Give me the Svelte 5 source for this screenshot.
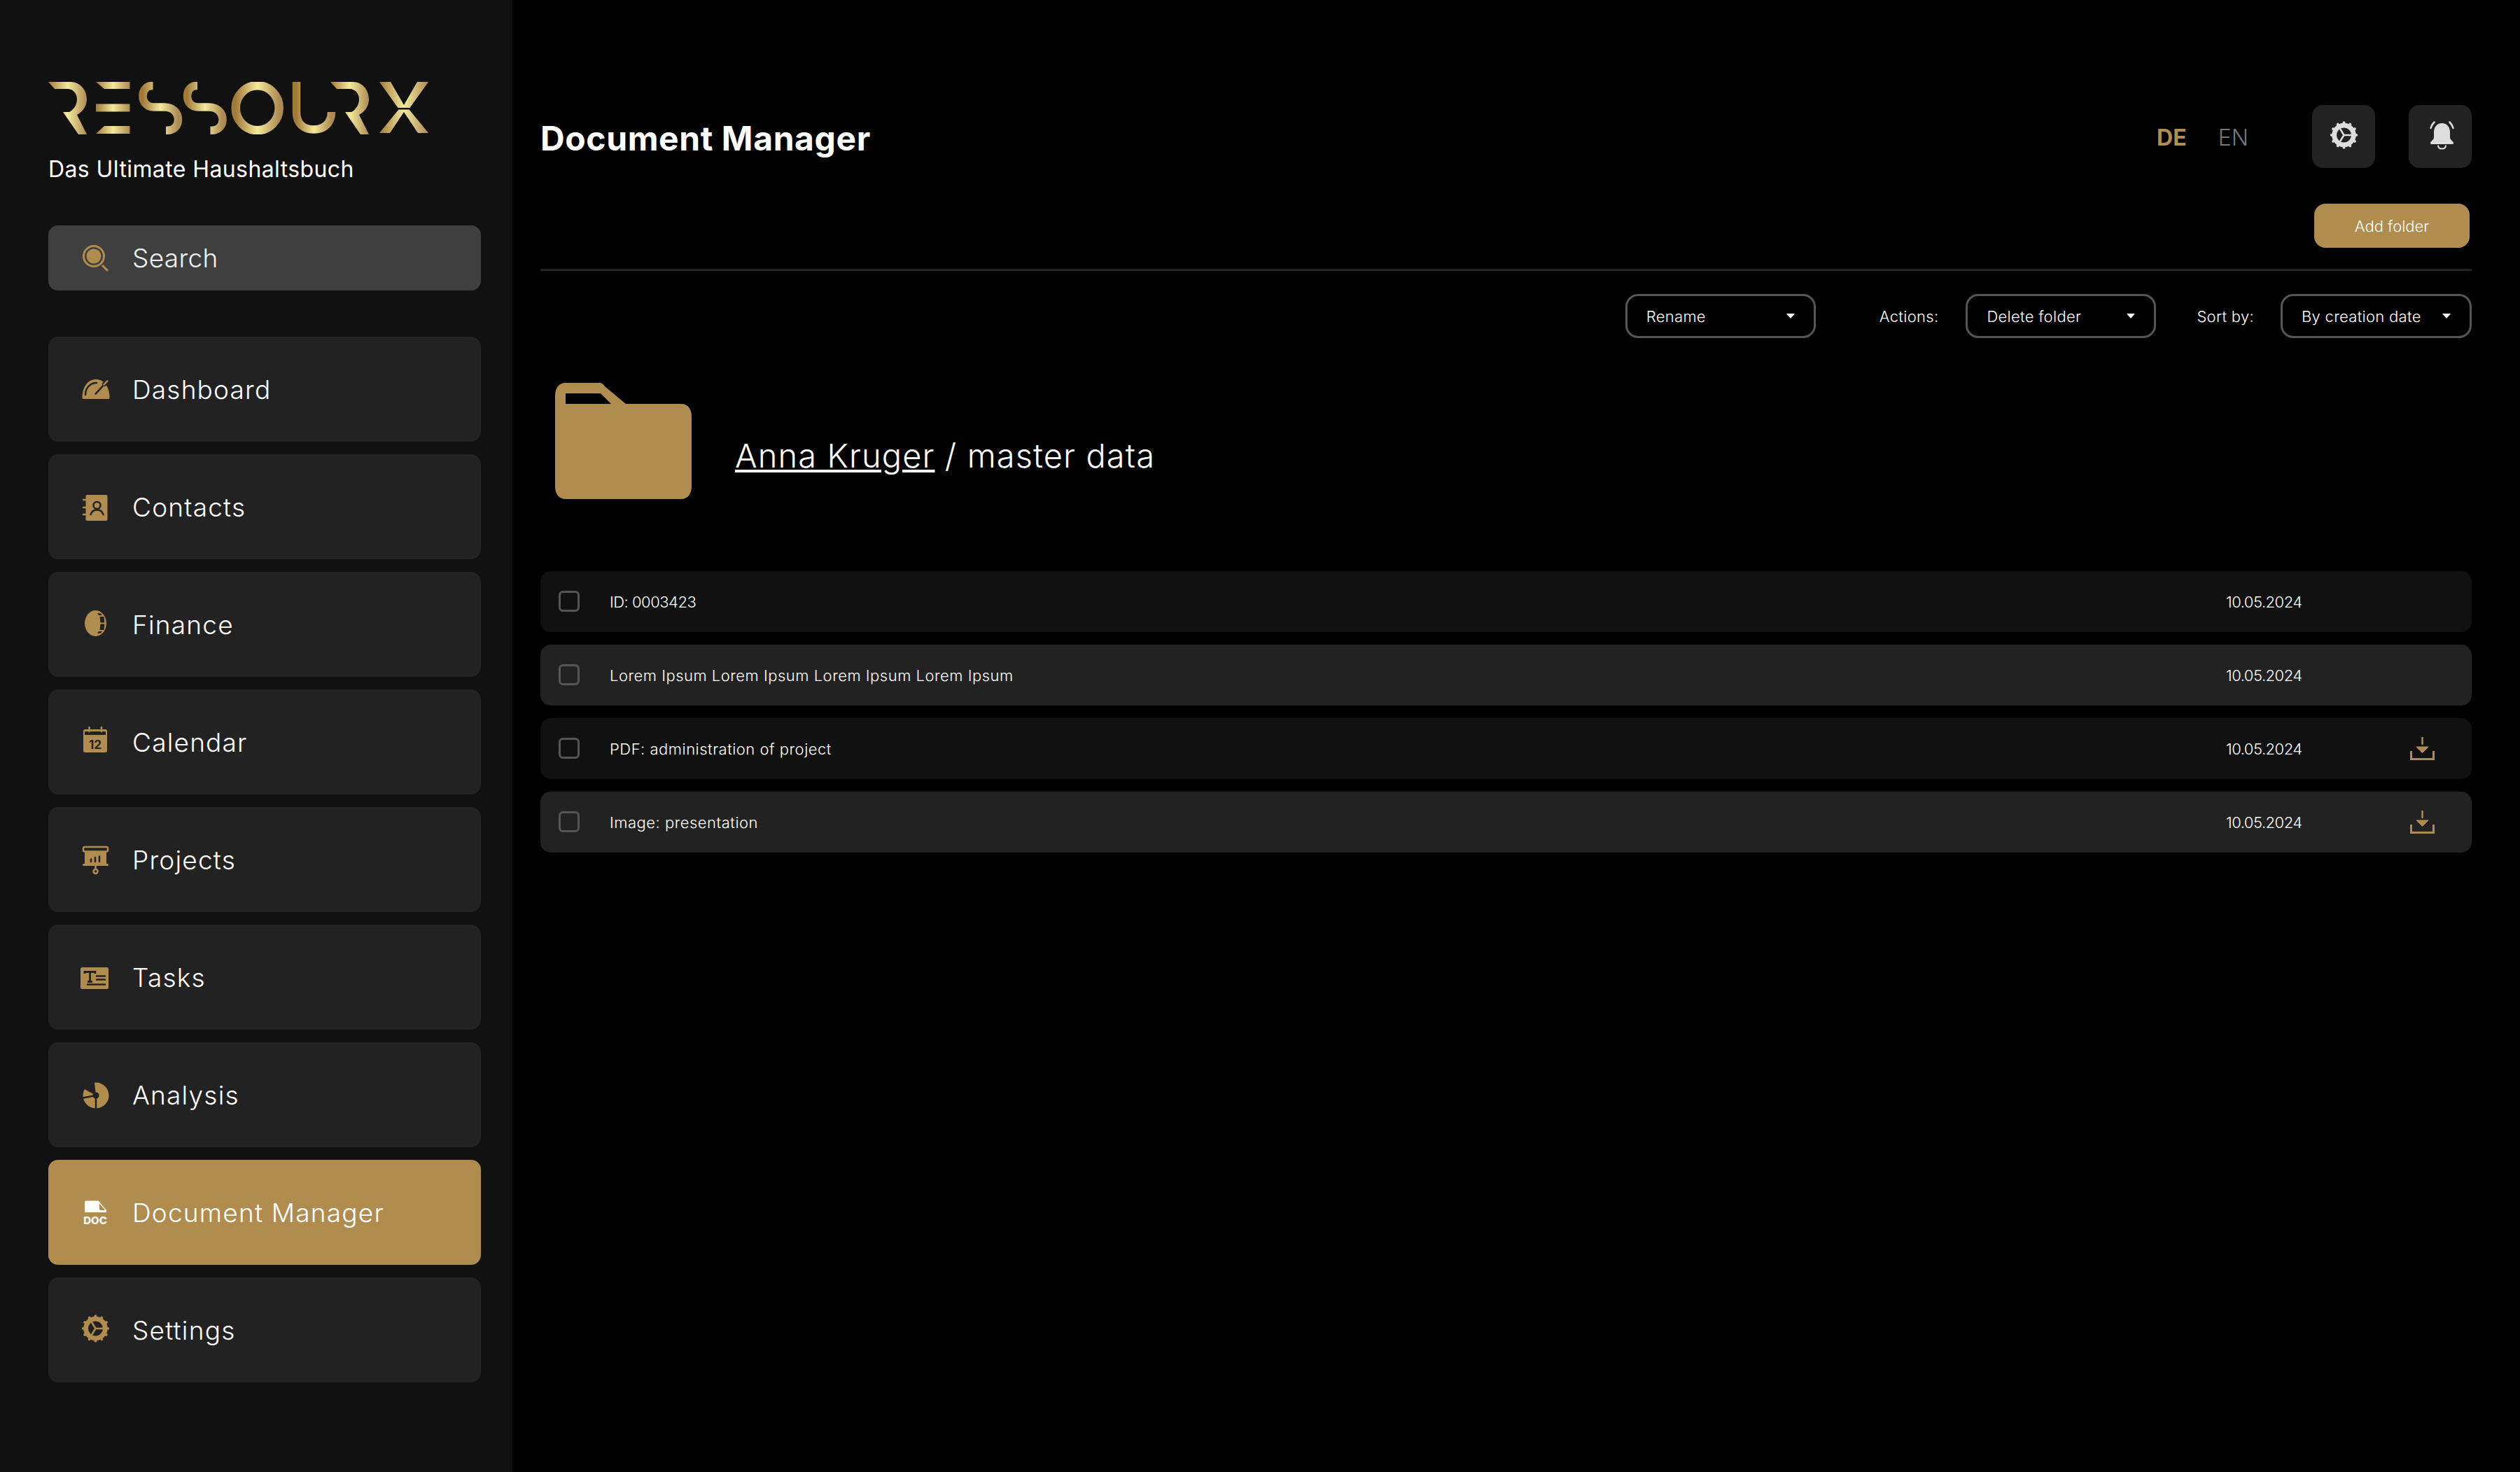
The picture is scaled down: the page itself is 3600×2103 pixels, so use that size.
<script>
  const nav = [
    { id: 'dashboard', label: 'Dashboard' },
    { id: 'contacts', label: 'Contacts' },
    { id: 'finance', label: 'Finance' },
    { id: 'calendar', label: 'Calendar' },
    { id: 'projects', label: 'Projects' },
    { id: 'tasks', label: 'Tasks' },
    { id: 'analysis', label: 'Analysis' },
    { id: 'docs', label: 'Document Manager', active: true },
    { id: 'settings', label: 'Settings' }
  ]

  const rows = [
    { name: 'ID: 0003423', date: '10.05.2024' },
    { name: 'Lorem Ipsum Lorem Ipsum Lorem Ipsum Lorem Ipsum', date: '10.05.2024' },
    { name: 'PDF: administration of project', date: '10.05.2024', download: true },
    { name: 'Image: presentation', date: '10.05.2024', download: true }
  ]

  const teeth = [0, 30, 60, 90, 120, 150, 180, 210, 240, 270, 300, 330]

  // R of the logo, used twice
  const logoR = 'M0 0H32C45 0 55 11 55 25C55 34 50 42 41 47L55 75H43L21 43H30C36 40 41 33 41 25C41 16 35 10 27 10H9Z'
</script>

{#snippet gear()}
  <g fill="currentColor">
    {#each teeth as a}
      <rect x="21.7" y="2.5" width="3.6" height="5" rx="1.2" transform="rotate({a} 23.5 22)" />
    {/each}
    <path fill-rule="evenodd" d="M23.5 4.7a17.3 17.3 0 1 0 0 34.600a17.3 17.3 0 1 0 0-34.600ZM23.5 11.500a10.500 10.500 0 1 1 0 21a10.500 10.500 0 1 1 0-21Z" />
  </g>
  <path d="M23.5 22H34M23.5 22L18 13M23.5 22L18 31" fill="none" stroke="currentColor" stroke-width="2.5" />
{/snippet}

<div class="app">
  <aside class="sidebar">
    <svg class="logo" viewBox="0 0 543 75" width="543" height="75" aria-label="RESSOURX">
      <defs>
        <linearGradient id="gold">
          <stop offset="0" stop-color="#a27a38" />
          <stop offset="0.5" stop-color="#f4e99c" />
          <stop offset="1" stop-color="#ad8b52" />
        </linearGradient>
      </defs>
      <path fill="url(#gold)" d={logoR} />
      <path fill="url(#gold)" d="M68 0H116.5V10H80Z" />
      <rect fill="url(#gold)" x="68" y="31.5" width="48.5" height="11" />
      <path fill="url(#gold)" d="M80 63H116.5V74H68Z" />
      <g fill="none" stroke="url(#gold)" stroke-width="11.5">
        <path d="M149.5 5.5H148C140 5.5 135 12 135 20C135 30 142 36 150 36H166C178 36 185.5 44 185.5 54C185.5 64 178 69.5 168 69.5" />
        <path d="M213 5.5H211.5C203.5 5.5 198.5 12 198.5 20C198.5 30 205.5 36 213.5 36H229.5C241.5 36 249 44 249 54C249 64 241.5 69.5 231.5 69.5" />
        <ellipse cx="298.7" cy="37.2" rx="31" ry="32" stroke-width="12.5" />
        <path d="M354.5 0V43C354.5 60 365 68 379 68C393 68 404.5 60 404.5 43" />
      </g>
      <path fill="url(#gold)" transform="translate(403 0)" d={logoR} />
      <path fill="url(#gold)" d="M473 0H489L508 33L527 0H543L516.5 37H499.5Z" />
      <path fill="url(#gold)" d="M500.5 39.5H515.5L543 73H528L508 43L488 73H473Z" />
    </svg>
    <div class="tagline">Das Ultimate Haushaltsbuch</div>

    <div class="search">
      <svg class="nav-icon" viewBox="0 0 48 48" width="48" height="48">
        <circle cx="21" cy="21" r="14.5" fill="none" stroke="currentColor" stroke-width="3" />
        <circle cx="21" cy="21" r="10.5" fill="currentColor" />
        <path d="M33 34L41 42" stroke="currentColor" stroke-width="3" />
      </svg>
      <span>Search</span>
    </div>

    <nav class="nav">
      {#each nav as item}
        <div class="nav-item" class:active={item.active}>
          <svg class="nav-icon" viewBox="0 0 48 48" width="48" height="48">
            {#if item.id === 'dashboard'}
              <path fill="currentColor" d="M4.5 36C4.5 20 13 10 24 10C35 10 43.5 20 43.5 36Q43.5 38 42 38H6Q4.5 38 4.5 36Z" />
              <path fill="none" stroke="#222" stroke-width="2.5" stroke-linecap="round" d="M9 32C9 22 16 15 25 15" />
              <path fill="none" stroke="#222" stroke-width="2.5" stroke-linecap="round" d="M23.7 30.7L36 17" />
              <path fill="none" stroke="#222" stroke-width="6" d="M34.5 18.500L42 10.500" />
              <path fill="none" stroke="currentColor" stroke-width="2.5" stroke-linecap="round" d="M35.5 17.500L40.3 12.300" />
            {:else if item.id === 'contacts'}
              <rect x="9.5" y="7" width="31" height="37" rx="2" fill="currentColor" />
              <path d="M6 14H11M6 25H11M6 35H11" stroke="currentColor" stroke-width="2.5" stroke-linecap="round" />
              <circle cx="25.5" cy="22" r="5" fill="none" stroke="#222" stroke-width="2.5" />
              <path d="M16.5 35C18 30 21 28.5 25.5 28.5C30 28.5 33 30 34.5 35" fill="none" stroke="#222" stroke-width="2.5" stroke-linecap="round" />
            {:else if item.id === 'finance'}
              <ellipse cx="23.5" cy="22.5" rx="15.5" ry="18.5" fill="currentColor" />
              <path fill="#222" d="M29.5 13H35.500L36.300 21.500H30.500ZM30.500 23.500H36.300L35.500 32H29.500ZM26 8L31 8.500L33 11H28ZM26 37L31 36.500L33 34H28Z" />
            {:else if item.id === 'calendar'}
              <rect x="6" y="6" width="34" height="33" rx="2.5" fill="currentColor" />
              <rect x="8" y="9" width="30" height="5" fill="#222" />
              <path d="M14.5 3V9M32 3V9" stroke="currentColor" stroke-width="2.5" stroke-linecap="round" />
              <text class="icon-num" x="23" y="34" text-anchor="middle">12</text>
            {:else if item.id === 'projects'}
              <rect x="6" y="6" width="35" height="6.500" rx="2" fill="none" stroke="currentColor" stroke-width="2.5" />
              <rect x="8" y="12.500" width="31" height="18" fill="currentColor" />
              <rect x="5" y="30" width="37" height="3" rx="1.5" fill="currentColor" />
              <path d="M23.5 33V38" stroke="currentColor" stroke-width="2.5" />
              <circle cx="23.5" cy="41" r="3" fill="none" stroke="currentColor" stroke-width="2.5" />
              <path d="M17 27V23.500M23 27V21M29 27V19.500" stroke="#222" stroke-width="2.500" stroke-linecap="round" />
            {:else if item.id === 'tasks'}
              <rect x="2" y="10" width="40" height="31" rx="2.5" fill="currentColor" />
              <path d="M8 19V16.5H23V19M15.5 16.5V30M12 30.5H19" fill="none" stroke="#222" stroke-width="2.8" />
              <path d="M25 22.5H37M25 27.5H37M12 34.5H37" stroke="#222" stroke-width="2.5" stroke-linecap="round" />
            {:else if item.id === 'analysis'}
              <circle cx="24" cy="25" r="18.5" fill="currentColor" />
              <path d="M24 25L21.500 2L2 4L4 14Z" fill="#222" />
              <path d="M24 25V45M24 25L3 29" stroke="#222" stroke-width="2.500" />
              <circle cx="24" cy="25" r="4.500" fill="#222" />
            {:else if item.id === 'docs'}
              <path fill="currentColor" d="M10 7.5H27.700L39 21V24H8V9.5A2 2 0 0 1 10 7.5Z" />
              <path fill="#B08D4F" d="M29 11L37 21H31C29.500 21 29 20 29 19Z" />
              <text class="icon-doc" x="23" y="40.5" text-anchor="middle">DOC</text>
            {:else}
              {@render gear()}
            {/if}
          </svg>
          <span class="nav-label">{item.label}</span>
        </div>
      {/each}
    </nav>
  </aside>

  <main class="main">
    <header class="header">
      <h1>Document Manager</h1>
      <div class="lang">
        <span class="de">DE</span>
        <span class="en">EN</span>
      </div>
      <button class="square">
        <svg viewBox="0 0 48 48" width="48" height="48">{@render gear()}</svg>
      </button>
      <button class="square bell">
        <svg viewBox="0 0 48 48" width="48" height="48">
          <path fill="currentColor" d="M25.5 5C18 5 14 11 14 18V25C14 29 9 31 9 33C9 35 10 35 12 35H39C41 35 42 35 42 33C42 31 37 29 37 25V18C37 11 33 5 25.5 5Z" />
          <path fill="none" stroke="currentColor" stroke-width="2" d="M20 36.5C20 40 22.5 41.5 25.5 41.5C28.5 41.5 31 40 31 36.5" />
          <path fill="none" stroke="currentColor" stroke-width="2.5" stroke-linecap="round" d="M9.5 12C10.5 8.5 12 6 14.5 3.5M41.5 12C40.5 8.5 39 6 36.5 3.5" />
        </svg>
      </button>
    </header>

    <div class="add-row">
      <button class="add">Add folder</button>
    </div>
    <div class="divider"></div>

    <div class="filters">
      <div class="select"><span>Rename</span><i class="caret"></i></div>
      <span class="filter-label actions">Actions:</span>
      <div class="select"><span>Delete folder</span><i class="caret"></i></div>
      <span class="filter-label sort">Sort by:</span>
      <div class="select wide"><span>By creation date</span><i class="caret"></i></div>
    </div>

    <div class="folder-head">
      <svg class="folder" viewBox="0 0 195 166" width="195" height="166">
        <path fill="#B08D4F" fill-rule="evenodd" d="M15 0H62C67 0 69 2 71 5L101 30H180C190 30 195 38 195 48V148C195 158 190 166 180 166H15C5 166 0 158 0 148V18C0 8 5 0 15 0ZM15 15V30H80L65 15Z" />
      </svg>
      <div class="crumb"><u>Anna Kruger</u> / master data</div>
    </div>

    <div class="rows">
      {#each rows as row}
        <div class="row">
          <span class="check"></span>
          <span class="name">{row.name}</span>
          <span class="date">{row.date}</span>
          <span class="action">
            {#if row.download}
              <svg viewBox="0 0 35 33" width="35" height="33">
                <path d="M17.5 0V10" stroke="#B08D4F" stroke-width="2.5" stroke-linecap="round" />
                <path d="M9 14H26L17.5 22.5Z" fill="#B08D4F" stroke="#B08D4F" stroke-linejoin="round" />
                <path d="M1.5 20V31.5H33.5V20" fill="none" stroke="#B08D4F" stroke-width="3" />
              </svg>
            {/if}
          </span>
        </div>
      {/each}
    </div>
  </main>
</div>

<style>
  :global(body) {
    margin: 0;
    background: #000;
    color: #fff;
    font-family: Inter, "Open Sans", sans-serif;
  }
  .app {
    display: flex;
    height: 100vh;
    overflow: hidden;
  }

  .sidebar {
    width: 732px;
    flex-shrink: 0;
    box-sizing: border-box;
    background: #111;
    padding: 117px 45px 0 69px;
  }
  .logo { display: block; }
  .tagline {
    margin-top: 30px;
    font-size: 32px;
    line-height: 40px;
    font-weight: 400;
    letter-spacing: 0.4px;
  }
  .search {
    display: flex;
    align-items: center;
    height: 93px;
    margin-top: 60px;
    background: #3f3f3f;
    border-radius: 14px;
    color: #B08D4F;
  }
  .search span {
    color: #f0f0f0;
    font-size: 37px;
    font-weight: 300;
    letter-spacing: 0.3px;
  }
  .nav-icon {
    flex-shrink: 0;
    margin: 0 28px 0 44px;
  }
  .nav {
    display: flex;
    flex-direction: column;
    gap: 18px;
    margin-top: 66px;
  }
  .nav-item {
    display: flex;
    align-items: center;
    height: 150px;
    background: #222;
    border-radius: 14px;
    color: #B08D4F;
  }
  .nav-item.active {
    background: #B08D4F;
    color: #fff;
  }
  .nav-label {
    color: #fff;
    font-size: 37px;
    font-weight: 300;
    letter-spacing: 1.2px;
  }
  .icon-num {
    font-size: 17px;
    font-weight: 700;
    fill: #222;
  }
  .icon-doc {
    font-size: 15px;
    font-weight: 800;
    fill: #fff;
  }

  .main {
    flex: 1;
    box-sizing: border-box;
    padding: 150px 69px 0 40px;
    min-width: 0;
  }
  .header {
    display: flex;
    align-items: center;
    height: 90px;
  }
  h1 {
    flex: 1;
    margin: 4px 0 0;
    font-size: 48px;
    font-weight: 700;
    letter-spacing: 0.6px;
  }
  .lang {
    display: flex;
    gap: 45px;
    margin: 2px 91px 0 0;
    font-size: 32px;
  }
  .de { color: #B08D4F; font-weight: 700; }
  .en { color: #777; font-weight: 300; }
  .square {
    display: flex;
    align-items: center;
    justify-content: center;
    width: 90px;
    height: 90px;
    padding: 0 0 0 2px;
    border: 0;
    border-radius: 15px;
    background: #222;
    color: #ddd;
  }
  .bell { margin-left: 48px; }

  .add-row {
    display: flex;
    justify-content: flex-end;
    margin: 51px 3px 0 0;
  }
  .add {
    width: 222px;
    height: 63px;
    border: 0;
    border-radius: 16px;
    background: #B08D4F;
    color: #fff;
    font-family: inherit;
    font-size: 22px;
    font-weight: 300;
  }
  .divider {
    height: 3px;
    margin-top: 30px;
    background: #222;
  }

  .filters {
    display: flex;
    align-items: center;
    justify-content: flex-end;
    margin-top: 33px;
    font-size: 22px;
    font-weight: 300;
    letter-spacing: 0.3px;
  }
  .select {
    display: flex;
    align-items: center;
    justify-content: space-between;
    box-sizing: border-box;
    width: 272px;
    height: 63px;
    padding: 0 27px 0 27px;
    border: 3px solid #555;
    border-radius: 18px;
  }
  .select.wide { width: 273px; }
  .caret {
    width: 0;
    height: 0;
    border-left: 6px solid transparent;
    border-right: 6px solid transparent;
    border-top: 7px solid #fff;
  }
  .filter-label { margin-right: 39px; }
  .actions { margin-left: 91px; }
  .sort { margin-left: 58px; margin-right: 38px; }

  .folder-head {
    display: flex;
    align-items: center;
    margin: 64px 0 0 21px;
  }
  .folder { flex-shrink: 0; }
  .crumb {
    margin: 40px 0 0 62px;
    font-size: 47px;
    font-weight: 300;
    letter-spacing: 1.1px;
  }

  .rows {
    display: flex;
    flex-direction: column;
    gap: 18px;
    margin-top: 103px;
  }
  .row {
    display: flex;
    align-items: center;
    height: 87px;
    padding-left: 26px;
    border-radius: 15px;
    background: #111;
    font-size: 22px;
    font-weight: 300;
  }
  .row:nth-child(even) { background: #222; }
  .check {
    box-sizing: border-box;
    width: 30px;
    height: 30px;
    margin: -2px 43px 0 0;
    border: 3px solid #555;
    border-radius: 6px;
  }
  .name { flex: 1; letter-spacing: 0.5px; }
  .row:first-child .name { letter-spacing: -0.5px; }
  .date { width: 107px; white-space: nowrap; letter-spacing: -0.5px; }
  .action {
    display: flex;
    width: 244px;
    box-sizing: border-box;
    padding-left: 156px;
  }
</style>
